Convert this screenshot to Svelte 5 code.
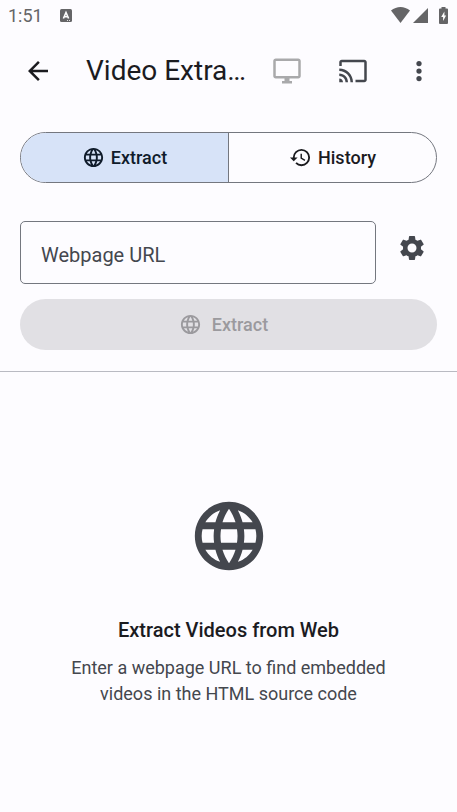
<script>
  let url = $state('');
  let tab = $state('extract');
</script>

{#snippet globe(size)}
  <svg class={size} viewBox="0 0 24 24" aria-hidden="true">
    <path d="M11.99 2C6.47 2 2 6.48 2 12s4.47 10 9.99 10C17.52 22 22 17.52 22 12S17.52 2 11.99 2zm6.93 6h-2.95c-.32-1.25-.78-2.45-1.38-3.56 1.84.63 3.37 1.91 4.33 3.56zM12 4.04c.83 1.2 1.48 2.53 1.91 3.96h-3.82c.43-1.43 1.08-2.76 1.91-3.96zM4.26 14C4.1 13.36 4 12.69 4 12s.1-1.36.26-2h3.38c-.08.66-.14 1.32-.14 2 0 .68.06 1.34.14 2H4.26zm.82 2h2.95c.32 1.25.78 2.45 1.38 3.56-1.84-.63-3.37-1.9-4.33-3.56zm2.95-8H5.08c.96-1.66 2.49-2.93 4.33-3.56C8.81 5.55 8.35 6.75 8.03 8zM12 19.96c-.83-1.2-1.48-2.53-1.91-3.96h3.82c-.43 1.43-1.08 2.76-1.91 3.96zM14.34 14H9.66c-.09-.66-.16-1.32-.16-2 0-.68.07-1.35.16-2h4.68c.09.65.16 1.32.16 2 0 .68-.07 1.34-.16 2zm.25 5.56c.6-1.11 1.06-2.31 1.38-3.56h2.95c-.96 1.65-2.49 2.93-4.33 3.56zM16.36 14c.08-.66.14-1.32.14-2 0-.68-.06-1.34-.14-2h3.38c.16.64.26 1.31.26 2s-.1 1.36-.26 2h-3.38z" />
  </svg>
{/snippet}

<div class="screen">
  <div class="status">
    <span>1:51</span>
    <svg class="badge" viewBox="0 0 12 13" aria-hidden="true">
      <rect width="12" height="13" rx="1.5" fill="#656567" />
      <path d="M3.4 9.5 6 3.5l2.600 6M4.300 7.700h3.400" fill="none" stroke="#fff" stroke-width="1.600" />
      <path d="M7 11.500h1M9 11.500h1" stroke="#fff" stroke-width=".8" />
    </svg>
    <svg class="wifi" viewBox="0 0 19 16" aria-hidden="true">
      <path d="M0 3.600C5.600-1.200 13.400-1.200 19 3.600L9.500 16z" />
    </svg>
    <svg class="signal" viewBox="0 0 15 15" aria-hidden="true"><path d="M15 0v15H0z" /></svg>
    <svg class="battery" viewBox="0 0 9 17" aria-hidden="true">
      <path d="M2.500 1.500V0h4v1.500H8a1 1 0 0 1 1 1V16a1 1 0 0 1-1 1H1a1 1 0 0 1-1-1V2.500a1 1 0 0 1 1-1z" />
      <path d="M5.400 4.500 2.200 10h1.900v4l3-5.500H5.400z" fill="#fff" />
    </svg>
  </div>

  <header>
    <button class="icon" aria-label="Back">
      <svg viewBox="0 0 24 24"><path d="M20 11H7.830l5.590-5.590L12 4l-8 8 8 8 1.410-1.410L7.830 13H20v-2z" fill="#1b1b1f" /></svg>
    </button>
    <h1>Video Extra…</h1>
    <button class="icon" aria-label="Play on device" disabled>
      <svg viewBox="0 0 24 24"><path d="M21 2H3c-1.100 0-2 .9-2 2v12c0 1.100.9 2 2 2h7v2H8v2h8v-2h-2v-2h7c1.100 0 2-.9 2-2V4c0-1.100-.9-2-2-2zm0 14H3V4h18v12z" fill="#a9a9ab" /></svg>
    </button>
    <button class="icon" aria-label="Cast">
      <svg viewBox="0 0 24 24"><path d="M21 3H3c-1.100 0-2 .9-2 2v3h2V5h18v14h-7v2h7c1.100 0 2-.9 2-2V5c0-1.100-.9-2-2-2zM1 18v3h3c0-1.660-1.340-3-3-3zm0-4v2c2.760 0 5 2.240 5 5h2c0-3.870-3.130-7-7-7zm0-4v2c4.970 0 9 4.030 9 9h2c0-6.080-4.930-11-11-11z" /></svg>
    </button>
    <button class="icon" aria-label="More options">
      <svg viewBox="0 0 24 24"><circle cx="12" cy="6" r="2.100" /><circle cx="12" cy="12" r="2.100" /><circle cx="12" cy="18" r="2.100" /></svg>
    </button>
  </header>

  <main>
    <div class="tabs">
      <button class:selected={tab === 'extract'} aria-pressed={tab === 'extract'} onclick={() => (tab = 'extract')}>
        {@render globe('small')}
        <span>Extract</span>
      </button>
      <button class:selected={tab === 'history'} aria-pressed={tab === 'history'} onclick={() => (tab = 'history')}>
        <svg class="small" viewBox="0 0 24 24" aria-hidden="true">
          <path d="M13 3a9 9 0 0 0-9 9H1l3.890 3.890.07.14L9 12H6c0-3.870 3.130-7 7-7s7 3.130 7 7-3.130 7-7 7c-1.930 0-3.680-.79-4.940-2.060l-1.420 1.420A8.954 8.954 0 0 0 13 21a9 9 0 0 0 0-18zm-1 5v5l4.280 2.540.72-1.210-3.500-2.080V8z" />
        </svg>
        <span>History</span>
      </button>
    </div>

    <div class="field">
      <input type="url" aria-label="Webpage URL" placeholder="Webpage URL" bind:value={url} />
      <button class="icon" aria-label="Settings">
        <svg viewBox="0 0 24 24"><path d="M19.140 12.940c.04-.3.060-.61.060-.94s-.02-.64-.07-.94l2.030-1.580a.49.49 0 0 0 .12-.61l-1.920-3.320a.49.49 0 0 0-.59-.22l-2.390.96c-.5-.38-1.030-.7-1.620-.94l-.36-2.540a.484.484 0 0 0-.48-.41h-3.840c-.24 0-.43.17-.47.41l-.36 2.540c-.59.24-1.130.57-1.620.94l-2.390-.96a.48.48 0 0 0-.59.22L2.740 8.870c-.12.21-.08.47.12.61l2.030 1.580c-.05.3-.09.63-.09.94s.02.64.07.94l-2.030 1.580a.49.49 0 0 0-.12.61l1.920 3.320c.12.22.37.29.59.22l2.390-.96c.5.38 1.030.7 1.620.94l.36 2.540c.05.24.24.41.48.41h3.840c.24 0 .44-.17.47-.41l.36-2.540c.59-.24 1.130-.56 1.620-.94l2.390.96c.22.08.47 0 .59-.22l1.920-3.320c.12-.22.07-.47-.12-.61zM12 15.600a3.600 3.600 0 1 1 0-7.200 3.600 3.600 0 0 1 0 7.200z" /></svg>
      </button>
    </div>

    <button class="submit" disabled={!url}>
      {@render globe('small')}
      <span>Extract</span>
    </button>
  </main>

  <section>
    {@render globe('large')}
    <h2>Extract Videos from Web</h2>
    <p>Enter a webpage URL to find embedded videos in the HTML source code</p>
  </section>
</div>

<style>
  :global(body) {
    background: #fdfcff;
  }
  .screen {
    min-height: 100vh;
    box-sizing: border-box;
    font-family: Roboto, sans-serif;
    color: #1b1b1f;
    background: #fdfcff;
  }
  svg {
    display: block;
    flex: none;
    fill: currentColor;
  }
  button {
    font: inherit;
    color: inherit;
    background: none;
    border: 0;
    padding: 0;
  }
  .status {
    display: flex;
    align-items: center;
    height: 30px;
    padding: 0 9px 0 8px;
    font-size: 18px;
    color: #656567;
  }
  .badge {
    width: 12px;
    height: 13px;
    margin-left: 17px;
  }
  .wifi {
    width: 19px;
    height: 16px;
    margin-left: auto;
  }
  .signal {
    width: 15px;
    height: 15px;
    margin-left: 3px;
  }
  .battery {
    width: 9px;
    height: 17px;
    margin-left: 11px;
  }
  header {
    display: flex;
    align-items: center;
    height: 81px;
    padding: 0 5px;
  }
  .icon {
    display: flex;
    flex: none;
    align-items: center;
    justify-content: center;
    width: 66px;
    height: 60px;
    color: #44474e;
  }
  .icon svg {
    width: 30px;
    height: 30px;
  }
  h1 {
    flex: 1;
    margin: 0 0 0 15px;
    font-size: 28px;
    line-height: 36px;
    font-weight: 400;
    white-space: nowrap;
  }
  main {
    display: flex;
    flex-direction: column;
    padding: 21px 20px;
    border-bottom: 1px solid #b9bac2;
  }
  .tabs {
    display: flex;
    height: 51px;
    box-sizing: border-box;
    border: 1px solid #74777f;
    border-radius: 26px;
    overflow: hidden;
  }
  .tabs button,
  .submit {
    display: flex;
    align-items: center;
    justify-content: center;
    font-size: 18px;
    font-weight: 500;
  }
  .tabs button {
    flex: 1;
    gap: 6px;
  }
  .tabs .selected {
    background: #d7e3f8;
    color: #101c2b;
  }
  .tabs button:first-child {
    border-right: 1px solid #74777f;
  }
  .small {
    width: 23px;
    height: 23px;
  }
  .field {
    display: flex;
    margin-top: 38px;
  }
  input {
    flex: 1;
    min-width: 0;
    height: 63px;
    box-sizing: border-box;
    padding: 4px 20px 0;
    border: 1px solid #74777f;
    border-radius: 5px;
    background: none;
    font: 400 20px Roboto, sans-serif;
    color: #1b1b1f;
  }
  input::placeholder {
    color: #44474e;
    opacity: 1;
  }
  .field .icon {
    width: 61px;
    height: 54px;
    padding-left: 10px;
  }
  .submit {
    gap: 10px;
    height: 51px;
    margin-top: 15px;
    padding-right: 10px;
    border-radius: 26px;
    background: #d7e3f8;
  }
  .submit:disabled {
    background: #e1e0e4;
    color: #9b9a9e;
  }
  section {
    display: flex;
    flex-direction: column;
    align-items: center;
    padding: 123px 60px 40px;
    text-align: center;
  }
  .large {
    width: 82px;
    height: 82px;
    color: #44474e;
  }
  h2 {
    margin: 40px 0 0;
    font-size: 20px;
    line-height: 26px;
    font-weight: 500;
  }
  p {
    max-width: 320px;
    margin: 12px 0 0;
    font-size: 18px;
    line-height: 26px;
    color: #44474e;
  }
</style>
